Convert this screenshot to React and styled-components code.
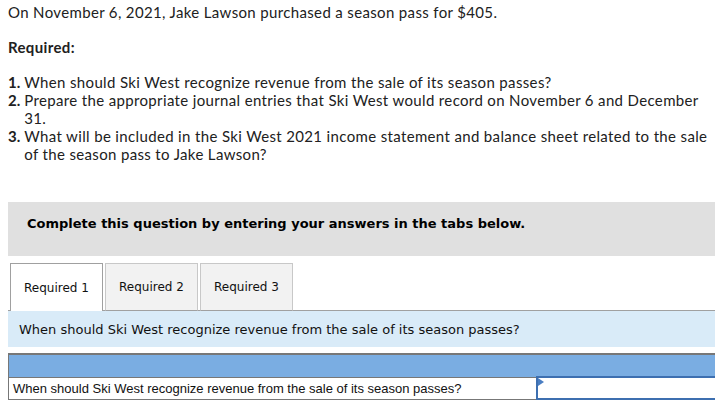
import React from 'react'
import styled, { createGlobalStyle } from 'styled-components'

const GlobalStyle = createGlobalStyle`
  body {
    margin: 0 0 0 8px;
    background: #fff;
    overflow: hidden;
  }
`

const questions = [
  'When should Ski West recognize revenue from the sale of its season passes?',
  'Prepare the appropriate journal entries that Ski West would record on November 6 and December 31.',
  'What will be included in the Ski West 2021 income statement and balance sheet related to the sale of the season pass to Jake Lawson?',
]

const tabs = ['Required 1', 'Required 2', 'Required 3']

function App() {
  return (
    <Page>
      <GlobalStyle />
      <Intro>
        <Para>On November 6, 2021, Jake Lawson purchased a season pass for $405.</Para>
        <Heading>Required:</Heading>
        <List>
          {questions.map((q, i) => (
            <Item key={i}>
              <Num>{i + 1}.</Num>
              <span>{q}</span>
            </Item>
          ))}
        </List>
      </Intro>

      <Banner>Complete this question by entering your answers in the tabs below.</Banner>

      <TabRow>
        {tabs.map((t, i) => (
          <Tab key={t} $active={i === 0}>{t}</Tab>
        ))}
      </TabRow>
      <TabPrompt>When should Ski West recognize revenue from the sale of its season passes?</TabPrompt>

      <AnswerTable>
        <tbody>
          <HeadRow>
            <th colSpan={2}></th>
          </HeadRow>
          <tr>
            <Cell>When should Ski West recognize revenue from the sale of its season passes?</Cell>
            <InputCell>
              <Flag />
            </InputCell>
          </tr>
        </tbody>
      </AnswerTable>
    </Page>
  )
}

export default App

const Page = styled.div`
  width: 100%;
`

const Intro = styled.div`
  width: 704px;
  padding-top: 3px;
  font-family: Lato, 'Open Sans', sans-serif;
  font-size: 15px;
  letter-spacing: 0.35px;
  line-height: 18px;
  color: #212121;
`

const Para = styled.p`
  margin: 0;
`

const Heading = styled.p`
  margin: 17px 0 0;
  font-weight: 700;
`

const List = styled.ol`
  list-style: none;
  margin: 17px 0 0;
  padding: 0;
`

const Item = styled.li`
  display: flex;
`

const Num = styled.b`
  flex: 0 0 11px;
  text-align: right;
  margin-right: 4px;
  letter-spacing: 0;
`

const Banner = styled.div`
  margin-top: 39px;
  height: 54px;
  box-sizing: border-box;
  padding: 14px 19px 0;
  background: #e0e0e0;
  font-family: 'DejaVu Sans', Verdana, sans-serif;
  font-weight: 700;
  font-size: 13px;
  line-height: 16px;
  color: #000;
`

const TabRow = styled.div`
  display: flex;
  gap: 2px;
  margin-top: 7px;
  padding-left: 2px;
  position: relative;
  z-index: 1;
`

const Tab = styled.div`
  width: 93px;
  height: 48px;
  box-sizing: border-box;
  display: flex;
  align-items: center;
  justify-content: center;
  border: 1px solid ${p => (p.$active ? '#a0a0a0' : '#c8c8c8')};
  border-bottom: ${p => (p.$active ? 'none' : '1px solid #a0a0a0')};
  background: ${p => (p.$active ? '#fff' : '#f2f2f2')};
  font-family: 'DejaVu Sans', Verdana, sans-serif;
  font-size: 12px;
  color: #111;
`

const TabPrompt = styled.div`
  margin-top: -1px;
  border-top: 1px solid #a0a0a0;
  background: #d9ebf8;
  height: 37px;
  box-sizing: border-box;
  padding: 11px 11px 0;
  font-family: 'DejaVu Sans', Verdana, sans-serif;
  font-size: 13px;
  line-height: 16px;
  color: #111;
`

const AnswerTable = styled.table`
  margin-top: 6px;
  width: 100%;
  border-collapse: collapse;
  font-family: 'Liberation Sans', Arial, sans-serif;
  font-size: 13px;
`

const HeadRow = styled.tr`
  th {
    height: 21px;
    background: #7aade2;
    border: 1px solid #777;
    border-top-width: 2px;
    border-right: none;
    padding: 0;
  }
`

const Cell = styled.td`
  width: 528px;
  height: 22px;
  box-sizing: border-box;
  padding: 0 4px;
  border: 1px solid #777;
  color: #111;
`

const InputCell = styled.td`
  position: relative;
  padding: 0;
  border: 2px solid #3d6fb0;
  border-right: none;
  background: #fff;
`

const Flag = styled.span`
  position: absolute;
  top: 0;
  left: 0;
  width: 0;
  height: 0;
  border-top: 4px solid transparent;
  border-bottom: 4px solid transparent;
  border-left: 6px solid #4a7ec2;
`
